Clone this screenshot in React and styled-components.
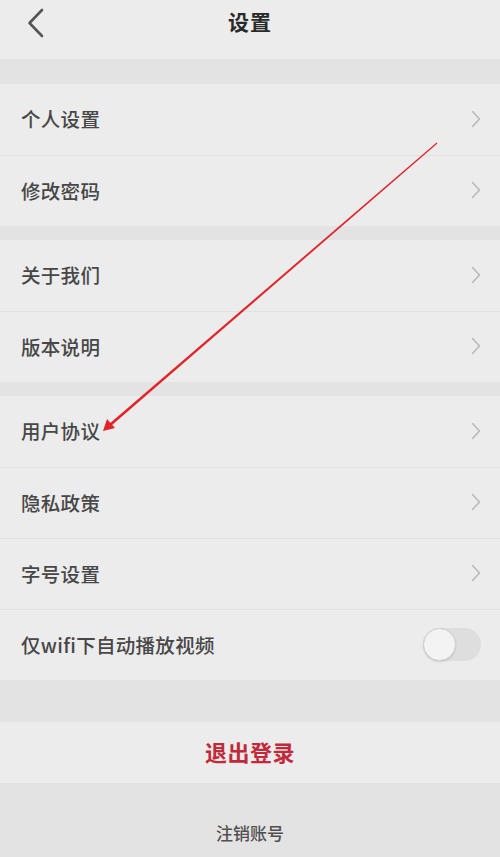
import React from "react";
import styled, { createGlobalStyle } from "styled-components";

const Global = createGlobalStyle`
  html, body { margin: 0; padding: 0; background: #e3e3e3; }
  body { font-family: "Noto Sans CJK SC", "Noto Sans", sans-serif; }
  * { box-sizing: border-box; }
`;

const Page = styled.div`
  position: relative;
  width: 500px;
  height: 857px;
  overflow: hidden;
  background: #e3e3e3;
  display: flex;
  flex-direction: column;
`;

const Header = styled.div`
  height: 59px;
  background: #ececec;
  display: flex;
  align-items: center;
  justify-content: center;
  position: relative;
`;

const BackBtn = styled.div`
  position: absolute;
  left: 26px;
  top: 8px;
  width: 22px;
  height: 30px;
  display: flex;
  align-items: center;
`;

const Title = styled.div`
  font-size: 21px;
  font-weight: 700;
  color: #2a2a2a;
  margin-top: -17px;
  letter-spacing: 1px;
`;

const Gap = styled.div`
  height: ${(p) => p.$h}px;
  background: #e3e3e3;
`;

const Group = styled.div`
  background: #ececec;
  display: flex;
  flex-direction: column;
`;

const Row = styled.div`
  height: 71px;
  display: flex;
  align-items: center;
  justify-content: space-between;
  padding: 0 19px 2px 21px;
  border-top: ${(p) => (p.$first ? "none" : "1px solid #e0e0e0")};
`;

const Label = styled.div`
  font-size: 19.5px;
  font-weight: 500;
  color: #474747;
  letter-spacing: 0.3px;
`;

const Chevron = () => (
  <svg width="10" height="18" viewBox="0 0 10 18">
    <path d="M1.5 1.5 L8.5 9 L1.5 16.5" fill="none" stroke="#b9b9b9" strokeWidth="1.6" strokeLinecap="round" strokeLinejoin="round" />
  </svg>
);

const Toggle = styled.div`
  width: 58px;
  height: 33px;
  border-radius: 17px;
  background: #dedede;
  position: relative;
`;

const Knob = styled.div`
  position: absolute;
  left: 0;
  top: 0;
  width: 33px;
  height: 33px;
  border-radius: 50%;
  background: #f3f3f3;
  border: 1px solid #cfcfcf;
  box-shadow: 0 1px 2px rgba(0, 0, 0, 0.12);
`;

const Logout = styled.div`
  height: 61px;
  background: #ececec;
  display: flex;
  align-items: center;
  justify-content: center;
  padding-bottom: 3px;
  font-size: 22px;
  font-weight: 700;
  color: #c12a3a;
  letter-spacing: 0.5px;
`;

const Cancel = styled.div`
  flex: 1;
  display: flex;
  justify-content: center;
  padding-top: 37px;
  font-size: 17px;
  font-weight: 500;
  color: #505050;
`;

const ArrowLayer = styled.svg`
  position: absolute;
  left: 0;
  top: 0;
  pointer-events: none;
`;

const groups = [
  ["个人设置", "修改密码"],
  ["关于我们", "版本说明"],
  ["用户协议", "隐私政策", "字号设置"],
];

export default function App() {
  return (
    <>
      <Global />
      <Page>
        <Header>
          <BackBtn>
            <svg width="20" height="30" viewBox="0 0 20 30">
              <path d="M16 2 L3.5 15 L16 28" fill="none" stroke="#555" strokeWidth="2.6" strokeLinecap="round" strokeLinejoin="round" />
            </svg>
          </BackBtn>
          <Title>设置</Title>
        </Header>
        <Gap $h={25} />
        <Group>
          {groups[0].map((t, i) => (
            <Row key={t} $first={i === 0}>
              <Label>{t}</Label>
              <Chevron />
            </Row>
          ))}
        </Group>
        <Gap $h={14} />
        <Group>
          {groups[1].map((t, i) => (
            <Row key={t} $first={i === 0}>
              <Label>{t}</Label>
              <Chevron />
            </Row>
          ))}
        </Group>
        <Gap $h={14} />
        <Group>
          {groups[2].map((t, i) => (
            <Row key={t} $first={i === 0}>
              <Label>{t}</Label>
              <Chevron />
            </Row>
          ))}
          <Row>
            <Label>仅wifi下自动播放视频</Label>
            <Toggle>
              <Knob />
            </Toggle>
          </Row>
        </Group>
        <Gap $h={42} />
        <Logout>退出登录</Logout>
        <Cancel>注销账号</Cancel>
        <ArrowLayer width="500" height="857" viewBox="0 0 500 857">
          <polygon points="437.4,143.5 436.6,142.5 109.1,423.9 110.9,426.1" fill="#e0242a" />
          <path d="M103 431 L107 419 L115 428 Z" fill="#e0242a" />
        </ArrowLayer>
      </Page>
    </>
  );
}
